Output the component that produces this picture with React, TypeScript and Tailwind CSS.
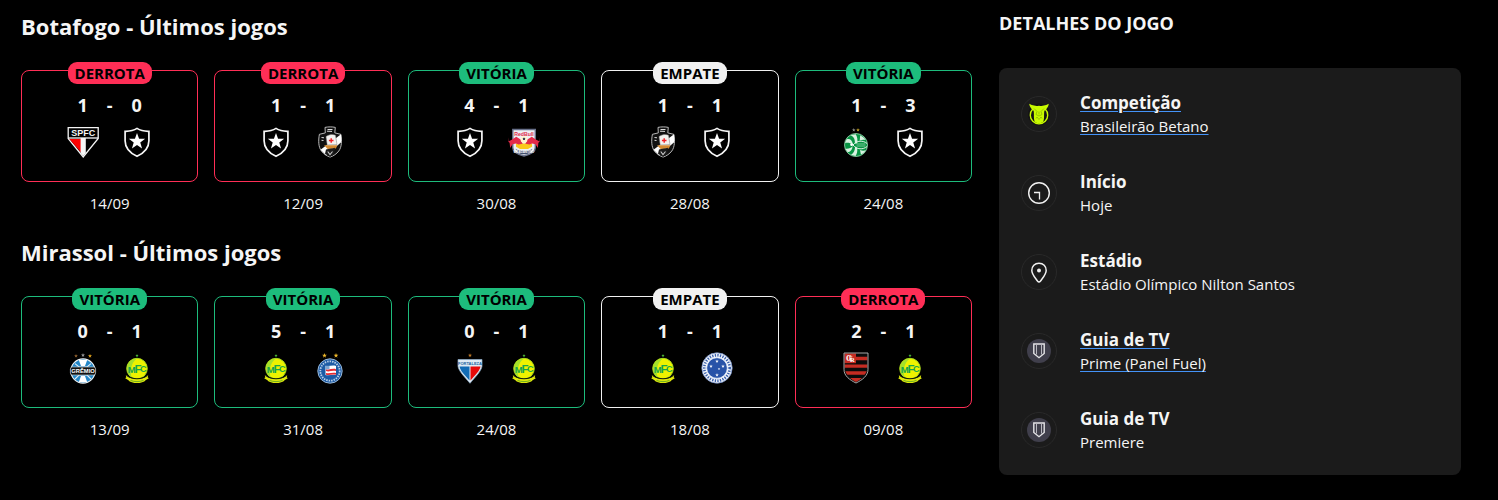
import React from 'react';

type Resultado = 'DERROTA' | 'VITÓRIA' | 'EMPATE';

interface Jogo {
  resultado: Resultado;
  gols: [number, number];
  times: [React.FC, React.FC];
  data: string;
}

interface Detalhe {
  titulo: string;
  valor: string;
  icone: React.ReactNode;
  href?: string;
}

const estilos: Record<Resultado, { borda: string; selo: string }> = {
  DERROTA: { borda: 'border-[#ff2e56]', selo: 'bg-[#ff2e56]' },
  VITÓRIA: { borda: 'border-[#1dbc7c]', selo: 'bg-[#1dbc7c]' },
  EMPATE: { borda: 'border-[#f1f1f1]', selo: 'bg-[#f1f1f1]' },
};

const Star = ({ x, y, r, fill }: { x: number; y: number; r: number; fill: string }) => (
  <path
    transform={`translate(${x} ${y}) scale(${r})`}
    fill={fill}
    d="M0-1 .24-.32.95-.31.38.12.59.81 0 .4-.59.81-.38.12-.95-.31-.24-.32z"
  />
);

const Escudo = ({ nome, children }: { nome: string; children: React.ReactNode }) => (
  <svg className="size-8" viewBox="0 0 32 32" role="img" aria-label={nome} fontFamily="Liberation Sans, sans-serif">
    {children}
  </svg>
);

const SaoPaulo = () => (
  <Escudo nome="São Paulo">
    <path d="M1.2 1.7h30v10.8L16.2 31 1.2 12.5z" fill="#000" stroke="#f4f4f4" strokeWidth="1.3" />
    <path d="M2.4 13H14v13.4z" fill="#fd0000" />
    <path d="M13.6 12h5.2v15L16.2 30l-2.6-3z" fill="#f6f6f6" />
    <path d="M1.2 12h30" stroke="#f4f4f4" strokeWidth="1.3" />
    <text x="16.2" y="10.1" textAnchor="middle" fontSize="9" fontWeight="700" fill="#f4f4f4">SPFC</text>
  </Escudo>
);

const Botafogo = () => (
  <Escudo nome="Botafogo">
    <path
      d="M16 2.4c3.3 2.2 7.4 3 11.9 2.9v9.400c0 6.700-4.700 12.200-11.900 15.600C8.800 26.900 4.100 21.400 4.100 14.700V5.300C8.600 5.400 12.700 4.600 16 2.400z"
      fill="#000"
      stroke="#f7f7f7"
      strokeWidth="1.7"
    />
    <Star x={16} y={15.5} r={8.6} fill="#fff" />
  </Escudo>
);

const Vasco = () => (
  <Escudo nome="Vasco da Gama">
    <path
      d="M11 1.4c3.200-.7 7.200-.7 10.300 0l-.5 5.500 6 1.400c1.100 6.400 1 12.700-2 16.700-2.300 3-5.200 4.900-8.700 6.100-3.500-1.200-6.400-3.100-8.700-6.100-3-4-3.200-10.300-2-16.700l5.900-1.400z"
      fill="#111"
      stroke="#c9c9c9"
      strokeWidth=".9"
    />
    <path d="M27 8.200c.5 3 .5 5.600.2 8L12 29.300 6.500 23.700z" fill="#fff" />
    <path d="M12 10.500c4-2.500 7-2.400 9.500-1.200l1.500 9.200-9.800.5z" fill="#f4f2ef" stroke="#777" strokeWidth=".5" />
    <path d="M17.200 12.200v4.600M14.900 14.500h4.600" stroke="#f01f26" strokeWidth="1.400" />
    <path d="M10 19.300h13.400l-1.500 3.200-8.200.5z" fill="#d58b32" />
    <path d="M12 23.500c3-1 6-.8 9-1.700l-1 7-4 2-5-3z" fill="#1b1b1b" />
    <path d="M13.500 3.500h5M13 5.200l5 .2M7.500 11.500l2.500.3M7.500 14.300l2 .2" stroke="#ddd" strokeWidth="1" />
    <path d="m13.700 25.500 2.300 3 2.500-3" fill="none" stroke="#ccc" strokeWidth="1.100" />
  </Escudo>
);

const Bragantino = () => (
  <Escudo nome="Red Bull Bragantino">
    <path d="M4.800 3.500h22.500v18.200c0 4.300-5.500 6.800-11.300 8.300-5.800-1.500-11.200-4-11.200-8.300z" fill="#edf1f5" stroke="#68708a" strokeWidth="1.400" />
    <text x="16" y="9.800" textAnchor="middle" fontSize="5.200" fontWeight="700" fill="#e0294a">RedBull</text>
    <path d="M8 17.500h16v3.200l-4 2.300h-8l-4-2.300z" fill="#fbc81b" />
    <path
      d="M.8 11.200v4l3.400-1.700 4-2.700 4.500 2.800 2 4.200-4.200.7-2.500-1.100-3.500.8-2.300 3.800-.6-5.200-1.200-1zM31.200 11.200v4l-3.400-1.700-4-2.700-4.500 2.800-2 4.200 4.200.7 2.500-1.100 3.500.8 2.300 3.800.6-5.200 1.200-1z"
      fill="#e42a49"
    />
    <circle cx="16" cy="13.500" r="3.400" fill="#fff3d0" />
    <path d="m14.700 12.500 1.300-1 1.300 1-.5 1.600h-1.600z" fill="#30364e" />
    <path d="M7.500 22.800c3 2.700 13.800 2.700 17 0l-2.200 3.600c-4 2.600-8.500 2.600-12.500 0z" fill="#44506f" />
    <text x="16" y="26.800" textAnchor="middle" fontSize="3" fontWeight="700" fill="#fff">BRAGANTINO</text>
  </Escudo>
);

const Juventude = () => (
  <Escudo nome="Juventude">
    <Star x={13.8} y={4} r={1.9} fill="#9c9c98" />
    <Star x={18} y={4} r={1.9} fill="#d9b426" />
    <circle cx="16" cy="19" r="11.500" fill="#079443" stroke="#9fd6b2" strokeWidth=".8" />
    <path
      d="M6.500 13.500c3-1.200 5.500.3 6.500 5.200-2.500-1.700-5-2.300-8-1.700zM10.500 9.300c4 1.800 4.600 5 4.300 8.200l2.300-.1c.9-3.500.1-6.700-1.300-9.200zM5.200 22.700c3.600.4 5.700-.6 7.500-2.600-.5 4-2.300 6-5 6.200zM11 28.800c3.100-2 4-4.500 4-8l2 .7c.8 3.300.1 6.300-1.500 8.500zM20.200 9.200c2.700 1.500 4.500 3 5.400 4.700-2.300-.5-4-.1-5.900.7zM20 24c2 .9 3.800 1 5.800.3-1 1.900-2.700 3.300-4.900 4.300z"
      fill="#d9f2e1"
    />
    <path d="M13 19c4-4.800 10-4.800 14.100-1.500M13 19c4 4.800 10 4.800 14.100 1.500" fill="none" stroke="#e0f5e7" strokeWidth="1" />
    <path d="M16.500 18h9M16.500 20h9" stroke="#75c795" strokeWidth="1.100" />
    <circle cx="11.600" cy="18.700" r="1.400" fill="#fff" />
  </Escudo>
);

const Gremio = () => (
  <Escudo nome="Grêmio">
    <Star x={9} y={4} r={2} fill="#94632f" />
    <Star x={16} y={3.2} r={2.1} fill="#9a9a9a" />
    <Star x={23} y={4} r={2.1} fill="#e4a51d" />
    <circle cx="16" cy="19" r="12.100" fill="#2487c8" stroke="#f0f4f7" strokeWidth="1.100" />
    <path d="M11.800 8h8.400L18 14h-4zM14 24h4l2.200 6.200h-8.400z" fill="#fff" />
    <path d="M8 11.600 12 15h8l4-3.400M8 27l4-4h8l4 4" fill="none" stroke="#e4eef5" strokeWidth="1.100" />
    <rect x="3.400" y="15" width="25.200" height="8" rx="2" fill="#111" stroke="#b8c4cb" strokeWidth=".7" />
    <text x="16" y="21.200" textAnchor="middle" fontSize="5.800" fontWeight="700" fill="#fff">GRÊMIO</text>
  </Escudo>
);

const Mirassol = () => (
  <Escudo nome="Mirassol">
    <Star x={16} y={3.6} r={1.7} fill="#4fc13b" />
    <circle cx="16" cy="16.600" r="10.300" fill="#eef200" stroke="#a6d81c" strokeWidth="1" />
    <path d="M16 6.500C8 7 4.500 14 6.800 20.500c.8 2 2 3.600 3.700 4.800C9 18 10 11 16 6.500z" fill="#a4e02b" />
    <g fill="#17a64d" fontWeight="700" textAnchor="middle">
      <text x="10.800" y="21" fontSize="9.500">M</text>
      <text x="17" y="21" fontSize="11.500">F</text>
      <text x="22.200" y="20" fontSize="9">C</text>
    </g>
    <path d="M4.800 23c4.800 5.200 17.600 5.200 22.400 0l-.5 2.300 1.100 1-2.900 1.600c-3.600 4.200-14.200 4.200-17.800 0l-2.900-1.600 1.100-1z" fill="#dfe80a" />
    <path d="M5.800 23.200c5 4.800 15.400 4.800 20.400 0" fill="none" stroke="#10190a" strokeWidth="1.100" />
    <path d="M9.500 28.400c4 1.600 9 1.600 13 0" fill="none" stroke="#62a725" strokeWidth=".9" />
  </Escudo>
);

const Bahia = () => (
  <Escudo nome="Bahia">
    <Star x={10.5} y={3.6} r={2.5} fill="#f0b829" />
    <Star x={22} y={3.6} r={2.5} fill="#f0b829" />
    <circle cx="16" cy="19" r="12.200" fill="#1d5ba5" stroke="#a9c6e3" strokeWidth=".9" />
    <circle cx="16" cy="19" r="9.700" fill="none" stroke="#b9d0e8" strokeWidth="1.800" strokeDasharray="1.500 1" />
    <circle cx="16" cy="19" r="7.600" fill="#1d5ba5" />
    <path d="M11.500 13.800c3 1.200 6.600-1.200 10.500.2v8.900c-3.500-1-7.200 1.200-10.500 0z" fill="#fff" />
    <path d="M12 17.200c3.400 1 6.500-1.100 10 0v1.900c-3.500-1.100-6.600 1-10 0zM12 21c3.400 1 6.500-1.100 10 0v1.800c-3.500-1.100-6.600 1-10 0z" fill="#e52a32" />
    <path d="M11.500 13.800h4v3.500h-4z" fill="#7fa8d4" />
  </Escudo>
);

const Fortaleza = () => (
  <Escudo nome="Fortaleza">
    <Star x={16} y={3.4} r={2.1} fill="#c47b25" />
    <path d="M4 7.500h24v6.800c-.8 5-6.500 10.500-12 17-5.500-6.500-11.200-12-12-17z" fill="#dfeaf3" stroke="#8eafcc" strokeWidth=".7" />
    <path d="M5.500 14.500h10v14c-5.500-6-9.200-9.800-10-14z" fill="#126cb5" />
    <path d="M16.500 14.500h10c-.8 4.200-4.500 8-10 14z" fill="#e80808" />
    <text x="16" y="12.700" textAnchor="middle" fontSize="4" fontWeight="700" fill="#2162a0">FORTALEZA</text>
  </Escudo>
);

const Cruzeiro = () => (
  <Escudo nome="Cruzeiro">
    <circle cx="16" cy="16" r="15.200" fill="#f3f6fb" stroke="#6d8ac4" strokeWidth=".8" />
    <circle cx="16" cy="16" r="12.700" fill="none" stroke="#3a60ad" strokeWidth="2.600" strokeDasharray="1.300 1.300" />
    <circle cx="16" cy="16" r="10.300" fill="#2853a8" stroke="#eaf0fa" strokeWidth=".7" />
    <Star x={16} y={9.3} r={1.9} fill="#fff" />
    <Star x={10} y={14.3} r={1.9} fill="#fff" />
    <Star x={22} y={14.3} r={1.9} fill="#fff" />
    <Star x={18} y={17} r={1.3} fill="#fff" />
    <Star x={16} y={23} r={1.9} fill="#fff" />
  </Escudo>
);

const Flamengo = () => (
  <Escudo nome="Flamengo">
    <path d="M4 1h24v16.500c0 6.300-5.700 10.500-12 13.500-6.300-3-12-7.200-12-13.500z" fill="#0b0b0b" />
    <path
      d="M16 4.700h11.300v3.600H16zM4.700 12.500h22.600v3.200H4.700zM5.300 19.300h21.400c-.6 1.500-1.300 2.700-2.100 3.500H7.400c-.9-.8-1.600-2-2.100-3.500zM10 26h12c-1.800 1.600-4 2.900-6 4-2-1.100-4.200-2.400-6-4z"
      fill="#c52c22"
    />
    <path d="M4.500 1.500H16v9.700H4.500z" fill="#c52c22" />
    <g fill="#fff" fontWeight="700" textAnchor="middle" fontFamily="Liberation Serif, serif">
      <text x="8.800" y="9" fontSize="8">C</text>
      <text x="10.600" y="7.800" fontSize="5.500">F</text>
      <text x="12.300" y="9.600" fontSize="6.500">R</text>
    </g>
    <path d="M4 1h24v16.500c0 6.300-5.700 10.500-12 13.500-6.300-3-12-7.200-12-13.500z" fill="none" stroke="#b9b9b9" strokeWidth=".9" />
  </Escudo>
);

const BrasileiraoIcon = () => (
  <svg className="size-6" viewBox="0 0 24 24" aria-hidden="true">
    <circle cx="12" cy="12.500" r="11" fill="#141414" />
    <circle cx="12" cy="13.200" r="8.700" fill="none" stroke="#c8fa00" strokeWidth="1.400" />
    <path d="M2.200 1.800c3.600 1.900 6.500 2.300 9.800 2.300s6.200-.4 9.800-2.300c-.4 3-2.200 5.500-4.400 6.900-.8 4 .4 8.300-1.400 11.400-2.500 1.900-5.500 1.900-8 0-1.800-3.100-.6-7.400-1.400-11.400-2.200-1.400-4-3.900-4.400-6.900z" fill="#c8fa00" />
    <path d="m7 6.500 3 3-1 3 3 1.500 3-1.500-1-3 3-3M9 16.500l1-1.500 2 2.500 2-2.500 1 1.500M12 9.500v3" fill="none" stroke="#86ac00" strokeWidth=".7" />
  </svg>
);

const RelogioIcon = () => (
  <svg className="size-6" viewBox="0 0 24 24" fill="none" stroke="#f1f1f1" aria-hidden="true">
    <circle cx="12" cy="12" r="10.300" strokeWidth="1.400" />
    <path d="M7 11.500h5.500V18.500" strokeWidth="1.300" />
  </svg>
);

const LocalIcon = () => (
  <svg className="size-6" viewBox="0 0 24 24" fill="none" aria-hidden="true">
    <path
      d="M12 3.200c-4.300 0-7.200 3.200-7.200 7.200 0 3.700 3.100 7 5.900 10.900.7.900 1.900.9 2.600 0 2.800-3.900 5.900-7.200 5.900-10.900 0-4-2.900-7.200-7.200-7.200z"
      stroke="#f1f1f1"
      strokeWidth="1.500"
    />
    <circle cx="12" cy="10.400" r="2" fill="#f1f1f1" />
  </svg>
);

const TvIcon = () => (
  <svg className="size-6" viewBox="0 0 24 24" fill="none" aria-hidden="true">
    <circle cx="12" cy="12" r="12" fill="#403f4c" />
    <path d="M6.800 5h10.400v9.500L12 18.700l-5.200-4.200z" stroke="#e3e3e6" strokeWidth="1.400" />
    <path d="M9.500 5v10.500M14.500 5v10.500" stroke="#b9b8c0" strokeWidth="1" />
  </svg>
);

const jogosBotafogo: Jogo[] = [
  { resultado: 'DERROTA', gols: [1, 0], times: [SaoPaulo, Botafogo], data: '14/09' },
  { resultado: 'DERROTA', gols: [1, 1], times: [Botafogo, Vasco], data: '12/09' },
  { resultado: 'VITÓRIA', gols: [4, 1], times: [Botafogo, Bragantino], data: '30/08' },
  { resultado: 'EMPATE', gols: [1, 1], times: [Vasco, Botafogo], data: '28/08' },
  { resultado: 'VITÓRIA', gols: [1, 3], times: [Juventude, Botafogo], data: '24/08' },
];

const jogosMirassol: Jogo[] = [
  { resultado: 'VITÓRIA', gols: [0, 1], times: [Gremio, Mirassol], data: '13/09' },
  { resultado: 'VITÓRIA', gols: [5, 1], times: [Mirassol, Bahia], data: '31/08' },
  { resultado: 'VITÓRIA', gols: [0, 1], times: [Fortaleza, Mirassol], data: '24/08' },
  { resultado: 'EMPATE', gols: [1, 1], times: [Mirassol, Cruzeiro], data: '18/08' },
  { resultado: 'DERROTA', gols: [2, 1], times: [Flamengo, Mirassol], data: '09/08' },
];

const detalhes: Detalhe[] = [
  { titulo: 'Competição', valor: 'Brasileirão Betano', icone: <BrasileiraoIcon />, href: '#competicao' },
  { titulo: 'Início', valor: 'Hoje', icone: <RelogioIcon /> },
  { titulo: 'Estádio', valor: 'Estádio Olímpico Nilton Santos', icone: <LocalIcon /> },
  { titulo: 'Guia de TV', valor: 'Prime (Panel Fuel)', icone: <TvIcon />, href: '#guia-de-tv' },
  { titulo: 'Guia de TV', valor: 'Premiere', icone: <TvIcon /> },
];

const JogoCard: React.FC<{ jogo: Jogo }> = ({ jogo }) => {
  const [Casa, Fora] = jogo.times;
  const estilo = estilos[jogo.resultado];

  return (
    <li className="flex flex-col items-center gap-[9px]">
      <div className={`flex w-full flex-col items-center gap-[9px] rounded-lg border pb-[23px] ${estilo.borda}`}>
        <span className={`-mt-[9px] rounded-[9px] px-[7px] text-[15px] leading-[22px] font-bold text-black ${estilo.selo}`}>
          {jogo.resultado}
        </span>
        <div className="flex text-center text-lg leading-6 font-bold">
          <span className="w-8">{jogo.gols[0]}</span>
          <span className="w-[22px]">-</span>
          <span className="w-8">{jogo.gols[1]}</span>
        </div>
        <div className="flex gap-[22px]">
          <Casa />
          <Fora />
        </div>
      </div>
      <time className="text-[15px] leading-6">{jogo.data}</time>
    </li>
  );
};

const UltimosJogos: React.FC<{ time: string; jogos: Jogo[] }> = ({ time, jogos }) => (
  <section>
    <h2 className="mb-[29px] text-[22px] leading-[30px] font-bold">{time} - Últimos jogos</h2>
    <ul className="grid grid-cols-5 gap-4">
      {jogos.map((jogo) => (
        <JogoCard key={jogo.data} jogo={jogo} />
      ))}
    </ul>
  </section>
);

const DetalheItem: React.FC<{ detalhe: Detalhe }> = ({ detalhe }) => {
  const texto = (
    <>
      <span className="block text-[17px] leading-6 font-bold">{detalhe.titulo}</span>
      <span className="block text-[15px] leading-[22px]">{detalhe.valor}</span>
    </>
  );

  return (
    <li className="flex items-center gap-[23px]">
      <div className="flex size-9 shrink-0 items-center justify-center rounded-full border border-[#292929]">
        {detalhe.icone}
      </div>
      {detalhe.href ? (
        <a href={detalhe.href} className="underline decoration-[#4493f8] decoration-1 underline-offset-2">
          {texto}
        </a>
      ) : (
        <div>{texto}</div>
      )}
    </li>
  );
};

export default function App() {
  return (
    <main className="grid min-h-screen grid-cols-[35fr_17fr] items-start gap-[27px] bg-black pt-[11px] pr-[37px] pb-5 pl-[21px] font-['Open_Sans',sans-serif] text-[#f5f5f5]">
      <div className="flex flex-col gap-[22px]">
        <UltimosJogos time="Botafogo" jogos={jogosBotafogo} />
        <UltimosJogos time="Mirassol" jogos={jogosMirassol} />
      </div>
      <aside>
        <h2 className="mb-[33px] text-lg leading-6 font-bold">DETALHES DO JOGO</h2>
        <ul className="flex flex-col gap-[33px] rounded-lg bg-[#1b1b1b] px-[22px] pt-[23px] pb-[22px]">
          {detalhes.map((detalhe, i) => (
            <DetalheItem key={i} detalhe={detalhe} />
          ))}
        </ul>
      </aside>
    </main>
  );
}
